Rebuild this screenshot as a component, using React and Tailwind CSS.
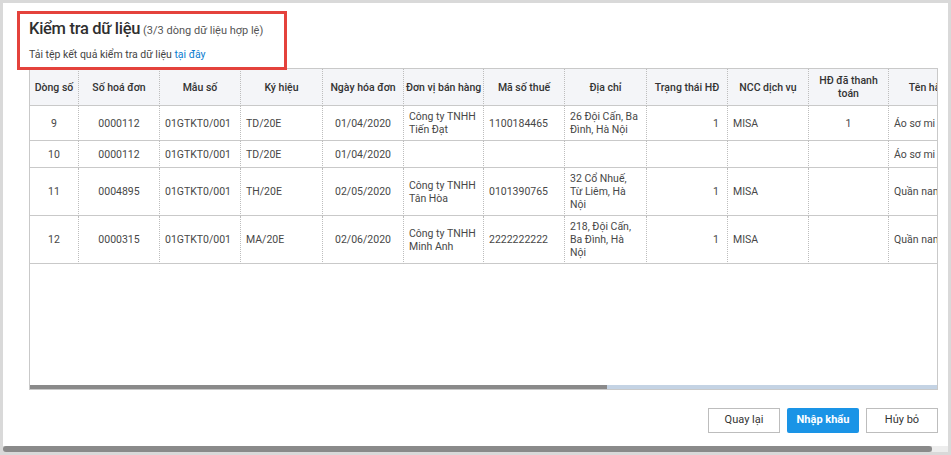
import React from 'react';

const columns = [
    { key: 'row', label: 'Dòng số', width: 49, align: 'text-center' },
    { key: 'invoiceNo', label: 'Số hoá đơn', width: 81, align: 'text-center' },
    { key: 'template', label: 'Mẫu số', width: 81, align: 'text-left' },
    { key: 'symbol', label: 'Ký hiệu', width: 82, align: 'text-left' },
    { key: 'date', label: 'Ngày hóa đơn', width: 81, align: 'text-center' },
    { key: 'seller', label: 'Đơn vị bán hàng', width: 80, align: 'text-left' },
    { key: 'taxCode', label: 'Mã số thuế', width: 81, align: 'text-left' },
    { key: 'address', label: 'Địa chỉ', width: 82, align: 'text-left' },
    { key: 'status', label: 'Trạng thái HĐ', width: 81, align: 'text-right' },
    { key: 'provider', label: 'NCC dịch vụ', width: 81, align: 'text-left' },
    { key: 'paid', label: ['HĐ đã thanh', 'toán'], width: 80, align: 'text-center' },
    { key: 'product', label: 'Tên hàng', width: 84, align: 'text-left' },
];

// multi-line cells are kept as arrays so they break where the grid breaks them
const rows = [
    {
        row: '9', invoiceNo: '0000112', template: '01GTKT0/001', symbol: 'TD/20E', date: '01/04/2020',
        seller: ['Công ty TNHH', 'Tiến Đạt'], taxCode: '1100184465', address: ['26 Đội Cấn, Ba', 'Đình, Hà Nội'],
        status: '1', provider: 'MISA', paid: '1', product: 'Áo sơ mi'
    },
    {
        row: '10', invoiceNo: '0000112', template: '01GTKT0/001', symbol: 'TD/20E', date: '01/04/2020',
        seller: '', taxCode: '', address: '', status: '', provider: '', paid: '', product: 'Áo sơ mi'
    },
    {
        row: '11', invoiceNo: '0004895', template: '01GTKT0/001', symbol: 'TH/20E', date: '02/05/2020',
        seller: ['Công ty TNHH', 'Tân Hòa'], taxCode: '0101390765', address: ['32 Cổ Nhuế,', 'Từ Liêm, Hà', 'Nội'],
        status: '1', provider: 'MISA', paid: '', product: 'Quần nam'
    },
    {
        row: '12', invoiceNo: '0000315', template: '01GTKT0/001', symbol: 'MA/20E', date: '02/06/2020',
        seller: ['Công ty TNHH', 'Minh Anh'], taxCode: '2222222222', address: ['218, Đội Cấn,', 'Ba Đình, Hà', 'Nội'],
        status: '1', provider: 'MISA', paid: '', product: 'Quần nam'
    },
];

const Lines = ({ value }) => {
    if (Array.isArray(value)) {
        return value.map((line, i) => <div key={i}>{line}</div>);
    }
    return value;
};

const App = () => {
    return (
        <div className="w-[951px] h-[455px] bg-[#d9d9d9] pt-[3px] pl-[3px] pr-[3px] flex flex-col overflow-hidden font-['Roboto',sans-serif]">
            <div className="relative h-[443px] bg-white pl-[26px] pr-[10px] pt-[16px] flex flex-col">
                {/* annotation box over the header */}
                <div className="absolute left-[14px] top-[8px] w-[270px] h-[59px] border-[3px] border-[#e4423c] z-10 pointer-events-none"></div>

                <div className="flex items-baseline h-[20px] leading-[20px]">
                    <h1 className="text-[16.5px] tracking-[-0.3px] font-medium text-[#2f2f2f]">Kiểm tra dữ liệu</h1>
                    <span className="ml-[3px] text-[11px] text-[#555]">(3/3 dòng dữ liệu hợp lệ)</span>
                </div>
                <p className="mt-[9px] text-[10.5px] leading-[13px] text-[#444]">
                    Tải tệp kết quả kiểm tra dữ liệu <a href="#" className="text-[#0a7dd0]">tại đây</a>
                </p>

                <div className="mt-[7px] h-[322px] w-[909px] border border-[#c9c9c9] flex flex-col">
                    <div className="flex-1 overflow-hidden">
                        <table className="table-fixed border-separate border-spacing-0 text-[10.5px] leading-[13px]" style={{ width: columns.reduce((s, c) => s + c.width, 0) }}>
                            <colgroup>
                                {columns.map(c => <col key={c.key} style={{ width: c.width }} />)}
                            </colgroup>
                            <thead>
                                <tr>
                                    {columns.map(c => (
                                        <th
                                            key={c.key}
                                            className="h-[37px] px-[2px] py-[5px] bg-[#f4f5f8] font-medium text-[#333] text-center align-middle whitespace-nowrap overflow-hidden border-b border-[#c9c9c9] border-r [border-right-style:dotted] [border-right-color:#bdbdbd]"
                                        >
                                            <Lines value={c.label} />
                                        </th>
                                    ))}
                                </tr>
                            </thead>
                            <tbody>
                                {rows.map(r => (
                                    <tr key={r.row} className="h-[27px]">
                                        {columns.map(c => (
                                            <td
                                                key={c.key}
                                                className={`${c.align} ${c.align === 'text-right' ? 'pr-[8px] pl-[4px]' : 'px-[5px]'} py-[4px] text-[#474747] align-middle whitespace-nowrap overflow-hidden border-b border-[#c9c9c9] border-r [border-right-style:dotted] [border-right-color:#bdbdbd]`}
                                            >
                                                <Lines value={r[c.key]} />
                                            </td>
                                        ))}
                                    </tr>
                                ))}
                            </tbody>
                        </table>
                    </div>
                    <div className="h-[4px] flex">
                        <div className="w-[577px] bg-[#8a8a8a]"></div>
                        <div className="flex-1 bg-[#c4d3e4]"></div>
                    </div>
                </div>

                <div className="mt-[18px] w-[909px] flex justify-end gap-[7px] text-[11px]">
                    <button className="w-[72px] h-[25px] border border-[#bdbdbd] bg-white text-[#333]">Quay lại</button>
                    <button className="w-[72px] h-[25px] bg-[#1a94e6] text-white font-bold rounded-[2px]">Nhập khẩu</button>
                    <button className="w-[72px] h-[25px] border border-[#bdbdbd] bg-white text-[#333]">Hủy bỏ</button>
                </div>
            </div>

            <div className="h-[6px] flex">
                <div className="w-[929px] bg-[#8a8a8a] rounded-full"></div>
                <div className="flex-1 bg-[#ededed]"></div>
            </div>
        </div>
    );
};

export default App;
